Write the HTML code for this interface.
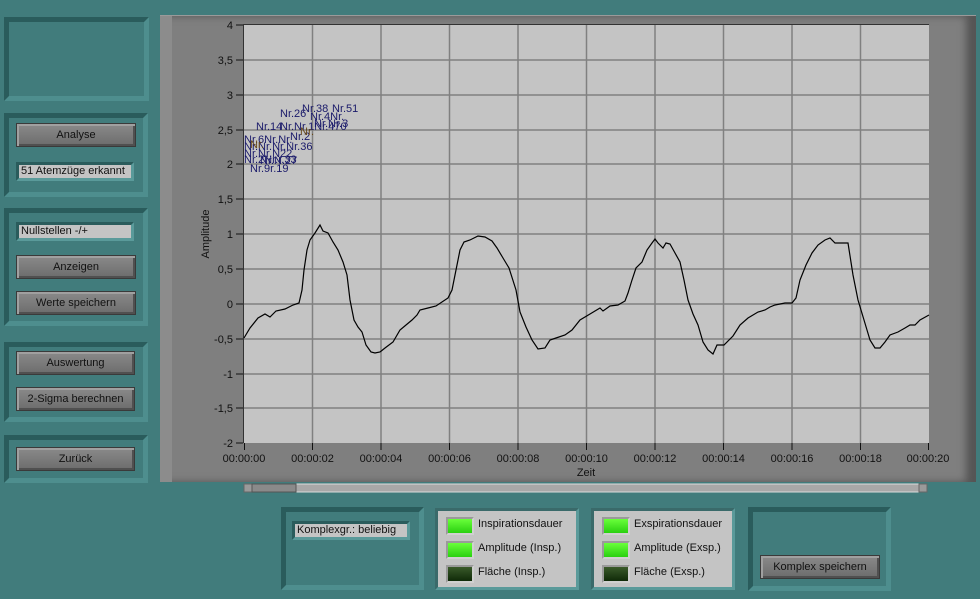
<!DOCTYPE html>
<html><head><meta charset="utf-8"><style>
*{margin:0;padding:0;box-sizing:border-box}
body{width:980px;height:599px;background:#417c7c;position:relative;overflow:hidden;font-family:"Liberation Sans",Tahoma,sans-serif;font-size:11px;color:#111}
.pn{position:absolute;border:5px solid;border-color:#2a5c5c #4e8e8e #4e8e8e #2a5c5c;background:#417c7c}
.btn{position:absolute;left:16px;width:120px;height:24px;background:linear-gradient(#8a8a8a,#6c6c6c);border:1px solid #3a3a3a;box-shadow:inset 2px 2px 0 #a0a0a0,inset -2px -2px 0 #505050;text-align:center;line-height:22px;color:#111;font-size:11px}
.fld{position:absolute;background:#c4c4c4;border:3px solid;border-color:#2a5c5c #5a9a9a #5a9a9a #2a5c5c;padding-left:2px;line-height:13px;font-size:11px;color:#111}
.gp{position:absolute;background:#c4c4c4;border:3px solid;border-color:#3a6a6a #5a9a9a #5a9a9a #3a6a6a}
.led{position:absolute;left:8px;width:28px;height:18px;border:2px solid;border-color:#9a9a9a #d0d0d0 #d0d0d0 #9a9a9a}
.on{background:linear-gradient(#6aff3a,#2ad010)}
.off{background:linear-gradient(#3a5a2a,#0f2a08)}
.lt{position:absolute;left:40px;font-size:11px}
</style></head><body>
<div class="pn" style="left:4px;top:17px;width:145px;height:84px"></div>
<div class="pn" style="left:4px;top:113px;width:144px;height:84px"></div>
<div class="btn" style="top:123px">Analyse</div>
<div class="fld" style="left:16px;top:162px;width:118px;height:19px">51 Atemzüge erkannt</div>
<div class="pn" style="left:4px;top:208px;width:144px;height:118px"></div>
<div class="fld" style="left:16px;top:222px;width:118px;height:19px">Nullstellen -/+</div>
<div class="btn" style="top:255px">Anzeigen</div>
<div class="btn" style="top:291px">Werte speichern</div>
<div class="pn" style="left:4px;top:342px;width:144px;height:80px"></div>
<div class="btn" style="top:351px;width:119px">Auswertung</div>
<div class="btn" style="top:387px;width:119px">2-Sigma berechnen</div>
<div class="pn" style="left:4px;top:435px;width:144px;height:48px"></div>
<div class="btn" style="top:447px;width:119px">Zurück</div>

<div style="position:absolute;left:160px;top:15px;width:816px;height:467px;background:#7f7f7f;border-top:1px solid #9a9a9a;box-shadow:inset 12px 0 0 #8c8c8c,inset -10px 0 8px #555"></div>
<svg style="position:absolute;left:0;top:0" width="980" height="599">
<rect x="244" y="25" width="685" height="418" fill="#c4c4c4"/>
<line x1="244" y1="24.5" x2="929" y2="24.5" stroke="#333"/>
<line x1="243.5" y1="24" x2="243.5" y2="443" stroke="#333"/>
<g stroke="#808080" stroke-width="1.5">
<line x1="312.5" y1="25" x2="312.5" y2="443"/><line x1="381" y1="25" x2="381" y2="443"/><line x1="449.5" y1="25" x2="449.5" y2="443"/><line x1="518" y1="25" x2="518" y2="443"/><line x1="586.5" y1="25" x2="586.5" y2="443"/><line x1="655" y1="25" x2="655" y2="443"/><line x1="723.5" y1="25" x2="723.5" y2="443"/><line x1="792" y1="25" x2="792" y2="443"/><line x1="860.5" y1="25" x2="860.5" y2="443"/>
<line x1="244" y1="60" x2="929" y2="60"/><line x1="244" y1="95" x2="929" y2="95"/><line x1="244" y1="130" x2="929" y2="130"/><line x1="244" y1="164" x2="929" y2="164"/><line x1="244" y1="199" x2="929" y2="199"/><line x1="244" y1="234" x2="929" y2="234"/><line x1="244" y1="269" x2="929" y2="269"/><line x1="244" y1="304" x2="929" y2="304"/><line x1="244" y1="339" x2="929" y2="339"/><line x1="244" y1="374" x2="929" y2="374"/><line x1="244" y1="408" x2="929" y2="408"/>
</g>
<g stroke="#111">
<line x1="236" y1="25" x2="243" y2="25"/><line x1="236" y1="60" x2="243" y2="60"/><line x1="236" y1="95" x2="243" y2="95"/><line x1="236" y1="130" x2="243" y2="130"/><line x1="236" y1="164" x2="243" y2="164"/><line x1="236" y1="199" x2="243" y2="199"/><line x1="236" y1="234" x2="243" y2="234"/><line x1="236" y1="269" x2="243" y2="269"/><line x1="236" y1="304" x2="243" y2="304"/><line x1="236" y1="339" x2="243" y2="339"/><line x1="236" y1="374" x2="243" y2="374"/><line x1="236" y1="408" x2="243" y2="408"/><line x1="236" y1="443" x2="243" y2="443"/>
<line x1="244.5" y1="443" x2="244.5" y2="450"/><line x1="312.5" y1="443" x2="312.5" y2="450"/><line x1="381" y1="443" x2="381" y2="450"/><line x1="449.5" y1="443" x2="449.5" y2="450"/><line x1="518" y1="443" x2="518" y2="450"/><line x1="586.5" y1="443" x2="586.5" y2="450"/><line x1="655" y1="443" x2="655" y2="450"/><line x1="723.5" y1="443" x2="723.5" y2="450"/><line x1="792" y1="443" x2="792" y2="450"/><line x1="860.5" y1="443" x2="860.5" y2="450"/><line x1="928.5" y1="443" x2="928.5" y2="450"/>
</g>
<g font-family="Liberation Sans,sans-serif" font-size="11" fill="#111" text-anchor="end">
<text x="233" y="29">4</text><text x="233" y="64">3,5</text><text x="233" y="99">3</text><text x="233" y="134">2,5</text><text x="233" y="168">2</text><text x="233" y="203">1,5</text><text x="233" y="238">1</text><text x="233" y="273">0,5</text><text x="233" y="308">0</text><text x="233" y="343">-0,5</text><text x="233" y="378">-1</text><text x="233" y="412">-1,5</text><text x="233" y="447">-2</text>
</g>
<g font-family="Liberation Sans,sans-serif" font-size="11" fill="#111" text-anchor="middle">
<text x="244" y="462">00:00:00</text><text x="312.5" y="462">00:00:02</text><text x="381" y="462">00:00:04</text><text x="449.5" y="462">00:00:06</text><text x="518" y="462">00:00:08</text><text x="586.5" y="462">00:00:10</text><text x="655" y="462">00:00:12</text><text x="723.5" y="462">00:00:14</text><text x="792" y="462">00:00:16</text><text x="860.5" y="462">00:00:18</text><text x="928" y="462">00:00:20</text>
<text x="586" y="476">Zeit</text>
<text transform="translate(209,234) rotate(-90)">Amplitude</text>
</g>
<polyline fill="none" stroke="#000" stroke-width="1.2" points="244,338 250,328 258,318 265,314 270,317 276,311 285,309 293,305 299,303 302,290 304,270 307,250 310,240 315,233 320,225 323,231 328,233 333,242 338,250 343,262 347,275 350,300 354,320 358,327 362,332 366,345 371,352 375,353 380,352 385,348 393,342 400,330 406,325 412,320 417,315 420,310 428,308 436,306 448,298 452,290 456,270 460,250 464,242 470,240 478,236 485,237 492,241 497,248 503,258 509,268 516,290 520,312 526,327 532,340 538,349 545,348 550,340 556,338 565,335 572,330 580,320 590,314 600,308 603,311 610,306 618,305 625,301 628,293 632,280 636,268 642,262 647,250 652,243 655,239 658,243 663,248 666,243 670,244 675,253 680,262 684,280 688,300 693,314 698,325 703,342 708,350 713,354 717,345 724,345 733,336 740,325 748,318 758,312 765,310 770,307 775,305 785,303 792,303 796,298 800,280 806,265 812,253 818,245 825,240 830,238 835,243 848,243 853,275 858,300 864,320 870,340 875,348 880,348 885,342 890,335 898,332 905,328 910,325 915,325 920,320 929,315"/>
<g font-family="Liberation Sans,sans-serif" font-size="11" fill="#1a1a6a">
<text x="302" y="112">Nr.38</text><text x="332" y="112">Nr.51</text><text x="280" y="117">Nr.26</text><text x="310" y="120">Nr.4Nr.</text><text x="314" y="127">Nr.Nr.3</text><text x="256" y="130">Nr.14</text><text x="280" y="130">Nr.Nr.1Nr.470</text>
<text x="244" y="143">Nr.6Nr.Nr.</text><text x="290" y="140">Nr.2</text><text x="244" y="150">Nr.Nr.Nr.Nr.36</text><text x="244" y="157">Nr.Nr.N22</text><text x="244" y="163">Nr.2Nr.r.33</text><text x="260" y="164">Nr.N.27</text><text x="250" y="172">Nr.9r.19</text>
</g>
<g font-family="Liberation Sans,sans-serif" font-size="11" fill="#6a4a1a"><text x="300" y="135">Nr.</text><text x="250" y="148">Nr.</text></g>
<rect x="244" y="484" width="683" height="8" fill="#a8a8a8" stroke="#dcdcdc"/>
<rect x="244" y="484" width="8" height="8" fill="#9a9a9a" stroke="#666"/>
<rect x="252" y="484" width="44" height="8" fill="#8a8a8a" stroke="#555"/>
<rect x="919" y="484" width="8" height="8" fill="#9a9a9a" stroke="#666"/>
</svg>

<div class="pn" style="left:281px;top:507px;width:143px;height:83px"></div>
<div class="fld" style="left:292px;top:521px;width:118px;height:19px">Komplexgr.: beliebig</div>
<div class="gp" style="left:435px;top:508px;width:144px;height:82px">
<div class="led on" style="top:6px"></div><div class="lt" style="top:7px">Inspirationsdauer</div>
<div class="led on" style="top:30px"></div><div class="lt" style="top:31px">Amplitude (Insp.)</div>
<div class="led off" style="top:54px"></div><div class="lt" style="top:55px">Fläche (Insp.)</div>
</div>
<div class="gp" style="left:591px;top:508px;width:144px;height:82px">
<div class="led on" style="top:6px"></div><div class="lt" style="top:7px">Exspirationsdauer</div>
<div class="led on" style="top:30px"></div><div class="lt" style="top:31px">Amplitude (Exsp.)</div>
<div class="led off" style="top:54px"></div><div class="lt" style="top:55px">Fläche (Exsp.)</div>
</div>
<div class="pn" style="left:748px;top:507px;width:143px;height:84px"></div>
<div class="btn" style="left:760px;top:555px;width:120px">Komplex speichern</div>
</body></html>
